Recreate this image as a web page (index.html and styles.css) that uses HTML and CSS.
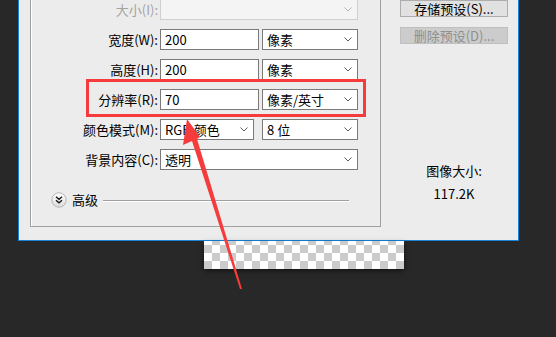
FILE: index.html
```html
<!DOCTYPE html>
<html lang="zh-CN">
<head>
    <meta charset="UTF-8">
    <meta name="viewport" content="width=device-width, initial-scale=1.0">
    <title>新建文档</title>
    <link rel="stylesheet" href="styles.css">
</head>
<body>

    <div class="dialog">
        <!-- Image size group -->
        <div class="group">
            <div class="row">
                <span class="label muted">大小(I):</span>
                <div class="select full off">
                    <span></span>
                    <svg class="chev" width="8" height="5" viewBox="0 0 8 5"><path d="M0.5 0.5 L4 4 L7.5 0.5" /></svg>
                </div>
            </div>
            <div class="row">
                <span class="label">宽度(W):</span>
                <div class="input">200</div>
                <div class="select unit">
                    <span>像素</span>
                    <svg class="chev" width="8" height="5" viewBox="0 0 8 5"><path d="M0.5 0.5 L4 4 L7.5 0.5" /></svg>
                </div>
            </div>
            <div class="row">
                <span class="label">高度(H):</span>
                <div class="input">200</div>
                <div class="select unit">
                    <span>像素</span>
                    <svg class="chev" width="8" height="5" viewBox="0 0 8 5"><path d="M0.5 0.5 L4 4 L7.5 0.5" /></svg>
                </div>
            </div>
            <div class="row">
                <span class="label">分辨率(R):</span>
                <div class="input">70</div>
                <div class="select unit">
                    <span>像素/英寸</span>
                    <svg class="chev" width="8" height="5" viewBox="0 0 8 5"><path d="M0.5 0.5 L4 4 L7.5 0.5" /></svg>
                </div>
            </div>
            <div class="row">
                <span class="label">颜色模式(M):</span>
                <div class="select mode">
                    <span>RGB 颜色</span>
                    <svg class="chev" width="8" height="5" viewBox="0 0 8 5"><path d="M0.5 0.5 L4 4 L7.5 0.5" /></svg>
                </div>
                <div class="select unit">
                    <span>8 位</span>
                    <svg class="chev" width="8" height="5" viewBox="0 0 8 5"><path d="M0.5 0.5 L4 4 L7.5 0.5" /></svg>
                </div>
            </div>
            <div class="row">
                <span class="label">背景内容(C):</span>
                <div class="select full">
                    <span>透明</span>
                    <svg class="chev" width="8" height="5" viewBox="0 0 8 5"><path d="M0.5 0.5 L4 4 L7.5 0.5" /></svg>
                </div>
            </div>

            <div class="advanced">
                <svg class="toggle" width="16" height="16" viewBox="0 0 16 16">
                    <defs>
                        <linearGradient id="tg" x1="0" y1="0" x2="0" y2="1">
                            <stop offset="0" stop-color="#ffffff" />
                            <stop offset="1" stop-color="#dcdcdc" />
                        </linearGradient>
                    </defs>
                    <circle cx="8" cy="8" r="7.2" fill="url(#tg)" stroke="#b4b4b4" />
                    <path d="M5 4.8 L8 7.3 L11 4.8 M5 8.3 L8 10.8 L11 8.3" fill="none" stroke="#1a1a1a" stroke-width="1.4" />
                </svg>
                <span>高级</span>
                <div class="rule"></div>
            </div>
        </div>

        <!-- Presets and size -->
        <div class="side">
            <button class="btn">存储预设(S)...</button>
            <button class="btn" disabled>删除预设(D)...</button>
            <div class="size-title">图像大小:</div>
            <div class="size-value">117.2K</div>
        </div>
    </div>

    <div class="canvas"></div>

    <!-- Red annotation: box and arrow -->
    <svg class="mark" width="556" height="337" viewBox="0 0 556 337">
        <rect x="87.5" y="80.5" width="277" height="35" fill="none" stroke="#f53b3b" stroke-width="3" />
        <polygon points="187,119 200,137 197,139 242,289 240,289 192,141 183,145" fill="#f53b3b" />
    </svg>

</body>
</html>
```

FILE: styles.css
```css
body {
    margin: 0;
    width: 556px;
    height: 337px;
    overflow: hidden;
    position: relative;
    background: #282828;
    font-family: "Noto Sans CJK SC", "Liberation Sans", sans-serif;
    font-size: 13px;
    color: #000;
}

/* Dialog */
.dialog {
    display: flex;
    align-items: flex-start;
    margin: -10px 0 0 18px;
    width: 501px;
    padding: 0 0 13px 11px;
    box-sizing: border-box;
    background: #ececec;
    border: 1px solid #1883d7;
    border-top: none;
}

.group {
    width: 351px;
    box-sizing: border-box;
    padding: 9px 0 18px 0;
    border: 1px solid #a0a0a0;
    border-top: none;
    box-shadow: inset 1px 0 0 #fff;
    display: flex;
    flex-direction: column;
    gap: 9px;
}

.row {
    display: flex;
    align-items: center;
    height: 21px;
}

.label {
    width: 127px;
    margin-right: 2px;
    text-align: right;
    line-height: 21px;
    white-space: nowrap;
}

.muted {
    color: #a3a3a3;
}

.input,
.select {
    height: 21px;
    box-sizing: border-box;
    border: 1px solid #7a7a7a;
    background: #fff;
    line-height: 19px;
    padding-left: 4px;
    white-space: nowrap;
}

.input {
    width: 99px;
    margin-right: 3px;
}

.select {
    display: flex;
    align-items: center;
    justify-content: space-between;
    padding-right: 5px;
}

.select .chev {
    fill: none;
    stroke: #5a5a5a;
    stroke-width: 1;
}

.unit {
    width: 96px;
}

.mode {
    width: 94px;
    margin-right: 8px;
}

.full {
    width: 198px;
}

.off {
    background: #f4f4f4;
    border-color: #cfcfcf;
}

.off .chev {
    stroke: #b5b5b5;
}

/* Advanced toggle */
.advanced {
    display: flex;
    align-items: center;
    height: 16px;
    margin: 13px 31px 0 20px;
    gap: 5px;
}

.advanced span {
    line-height: 16px;
}

.rule {
    flex: 1;
    height: 1px;
    background: #a0a0a0;
    box-shadow: 0 1px 0 #fff;
}

/* Right side */
.side {
    flex: 1;
    display: flex;
    flex-direction: column;
    align-items: center;
    padding: 10px 0 0 9px;
}

.btn {
    width: 108px;
    height: 17px;
    padding: 0;
    font-family: inherit;
    font-size: 13px;
    line-height: 15px;
    color: #000;
    background: #e1e1e1;
    border: 1px solid #adadad;
}

.btn + .btn {
    margin-top: 10px;
}

.btn:disabled {
    color: #8f8f8f;
    background: #cccccc;
    border-color: #bfbfbf;
}

.size-title {
    margin-top: 118px;
    line-height: 18px;
}

.size-value {
    margin-top: 5px;
    line-height: 18px;
}

/* Transparent canvas peeking below */
.canvas {
    margin-left: 204px;
    width: 200px;
    height: 28px;
    background: conic-gradient(#cbcbcb 25%, #fff 0 50%, #cbcbcb 0 75%, #fff 0) 0 -4px / 16px 16px;
    box-shadow: 0 2px 5px rgba(0, 0, 0, 0.5);
}

.mark {
    position: absolute;
    top: 0;
    left: 0;
}
```
